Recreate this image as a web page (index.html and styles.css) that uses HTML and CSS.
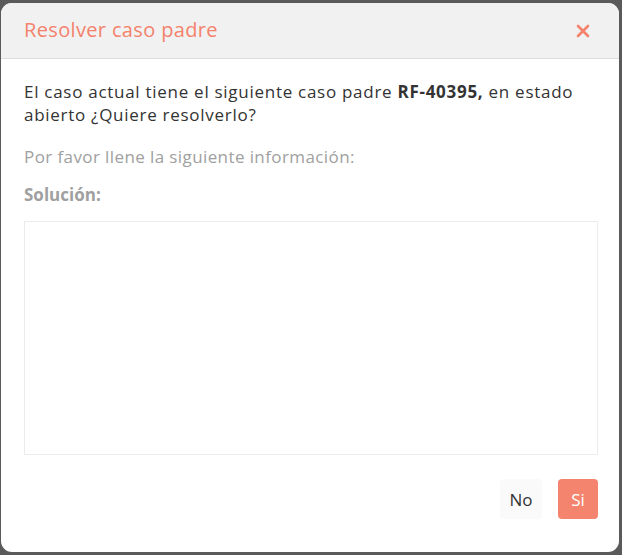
FILE: index.html
```html
<!DOCTYPE html>
<html lang="es">
  <head>
    <meta charset="UTF-8" />
    <title>Resolver caso padre</title>
    <link rel="stylesheet" href="styles.css">
  </head>
  <body>
    <div class="modal">
      <div class="modal-header">
        <h2 class="modal-title">Resolver caso padre</h2>
        <button class="close-btn" aria-label="Cerrar">
          <svg width="14" height="14" viewBox="0 0 14 14">
            <path d="M2 2 L12 12 M12 2 L2 12" stroke="#f4826c" stroke-width="2.6" stroke-linecap="round" />
          </svg>
        </button>
      </div>
      <div class="modal-body">
        <p class="question">
          El caso actual tiene el siguiente caso padre <strong>RF-40395,</strong> en estado
          abierto ¿Quiere resolverlo?
        </p>
        <p class="hint">Por favor llene la siguiente información:</p>
        <label class="field-label" for="solucion">Solución:</label>
        <textarea id="solucion" class="solution"></textarea>
      </div>
      <div class="modal-footer">
        <button class="btn btn-no">No</button>
        <button class="btn btn-si">Si</button>
      </div>
    </div>
  </body>
</html>
```

FILE: styles.css
```css
body {
  margin: 0;
  padding: 3px 3px 3px 1px;
  background-color: #5a5a5a;
  font-family: "Open Sans", "Liberation Sans", sans-serif;
}
.modal {
  width: 618px;
  height: 549px;
  background-color: #fff;
  border-radius: 11px;
  overflow: hidden;
  display: flex;
  flex-direction: column;
}
.modal-header {
  height: 55px;
  flex-shrink: 0;
  background-color: #f1f1f1;
  border-bottom: 1px solid #dcdcdc;
  display: flex;
  align-items: center;
  justify-content: space-between;
  padding: 0 29px 0 23px;
}
.modal-title {
  margin: 0 0 3px;
  font-size: 20px;
  font-weight: 400;
  letter-spacing: 0.35px;
  color: #f4826c;
}
.close-btn {
  border: none;
  background: transparent;
  padding: 0;
  display: flex;
  cursor: pointer;
}
.modal-body {
  padding: 21px 21px 0 23px;
  flex: 1;
  display: flex;
  flex-direction: column;
}
.question {
  margin: 0;
  font-size: 17px;
  line-height: 23px;
  letter-spacing: 0.72px;
  color: #333;
}
.question strong {
  font-weight: 700;
}
.hint {
  margin: 19px 0 0;
  font-size: 17px;
  line-height: 23px;
  letter-spacing: 0.4px;
  color: #a0a0a0;
}
.field-label {
  margin-top: 15px;
  font-size: 17px;
  line-height: 23px;
  font-weight: 700;
  color: #a0a0a0;
}
.solution {
  margin-top: 15px;
  height: 234px;
  border: 1px solid #ececec;
  resize: none;
  box-sizing: border-box;
  outline: none;
  font-family: inherit;
  font-size: 16px;
}
.modal-footer {
  display: flex;
  justify-content: flex-end;
  gap: 16px;
  padding: 0 21px 33px 0;
}
.btn {
  height: 40px;
  padding: 0;
  border: none;
  border-radius: 4px;
  font-family: inherit;
  font-size: 17px;
  cursor: pointer;
}
.btn-no {
  width: 42px;
  background-color: #fafafa;
  color: #333;
}
.btn-si {
  width: 40px;
  background-color: #f5846e;
  color: #fff;
}
```
